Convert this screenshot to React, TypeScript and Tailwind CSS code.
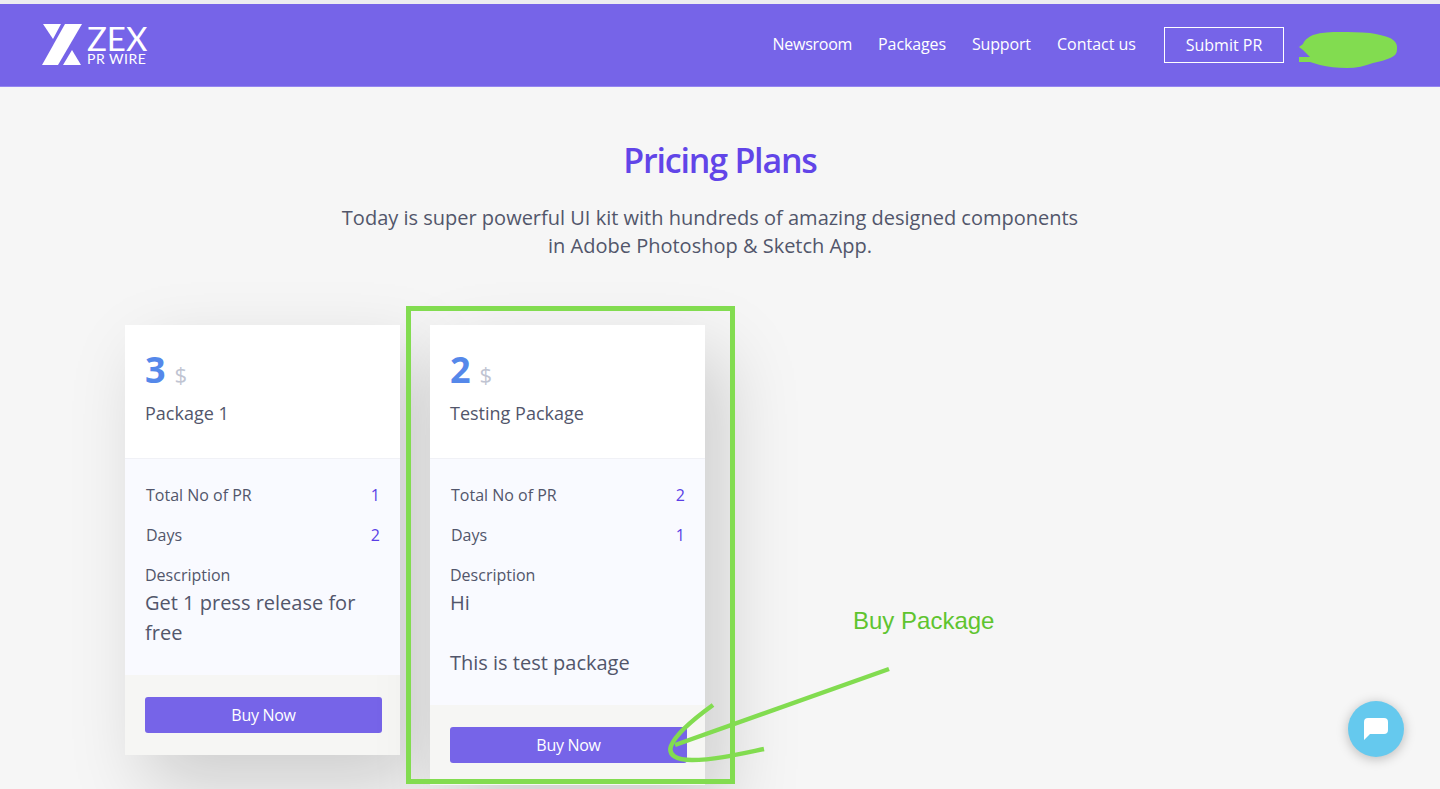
import React from 'react';

const NAV_LINKS = [
  { label: 'Newsroom', cls: 'tracking-[-0.25px]' },
  { label: 'Packages', cls: 'tracking-[-0.12px]' },
  { label: 'Support', cls: 'tracking-[-0.15px]' },
  { label: 'Contact us', cls: '' },
];

interface PlanProps {
  price: string;
  name: string;
  total: string;
  days: string;
  children: React.ReactNode;
}

function PlanCard({ price, name, total, days, children }: PlanProps) {
  return (
    <div className="w-[275px] bg-[#f6f6f4] shadow-[20px_30px_70px_rgba(0,0,0,0.17)]">
      {/* Plan title */}
      <div className="relative z-10 h-[134px] bg-white px-5 pt-[22px] border-b border-[#f0f1f6]">
        <div className="flex items-baseline h-[46px]">
          <span className="text-[36px] leading-[46px] font-bold text-[#5588ea]">{price}</span>
          <span className="ml-[9px] text-[22px] text-[#c0c4d2]">$</span>
        </div>
        <div className="mt-[6px] text-[18px] leading-[28px] text-[#52566b]">{name}</div>
      </div>

      {/* Plan details */}
      <div className="relative z-10 bg-[#f9faff] px-5 pt-[16px] pb-[27px] text-[#52566b]">
        <div className="flex justify-between pl-px h-[40px] items-center text-[16px] font-medium">
          <span>Total No of PR</span>
          <span className="text-[#5b3fe6] font-normal">{total}</span>
        </div>
        <div className="flex justify-between pl-px h-[40px] items-center text-[16px] font-medium">
          <span>Days</span>
          <span className="text-[#5b3fe6] font-normal">{days}</span>
        </div>
        <div className="mt-[8px] text-[16px] leading-[24px] font-medium">Description</div>
        <div className="pt-px text-[20px] leading-[30px]">{children}</div>
      </div>

      <div className="px-5 pt-[22px] pb-[22px]">
        <button className="w-[237px] h-[36px] rounded-[3px] bg-[#7664e8] text-white text-[16px] tracking-[-0.3px]">Buy Now</button>
      </div>
    </div>
  );
}

export default function App() {
  return (
    <div className="relative h-[789px] overflow-hidden bg-[#f6f6f6] font-['Open_Sans',sans-serif]">
      <div className="h-[4px] bg-[#ececf0]" />

      {/* Header */}
      <header className="flex items-center justify-between h-[83px] bg-[#7664e8] pl-[42px] pr-[42px] border-b border-[#9486f0]">
        <div className="flex items-center">
          <svg width="40" height="42" viewBox="42 24 40 42" fill="#fff">
            <path d="M43 24h18l-8 15z" />
            <path d="M65 24h17L58 65H42z" />
            <path d="M72 50l9 15H63z" />
          </svg>
          <div className="ml-[5px] w-[60px] text-white font-['Lato',sans-serif]">
            <div className="text-[33px] leading-[26px]">ZEX</div>
            <div className="text-[14px] leading-[15px] whitespace-nowrap tracking-[0.5px]">PR WIRE</div>
          </div>
        </div>

        <nav className="flex items-center text-white text-[16px] -translate-y-px">
          {NAV_LINKS.map((link) => (
            <a key={link.label} className={`mr-[26px] ${link.cls}`}>{link.label}</a>
          ))}
          <a className="ml-[2px] w-[120px] h-[36px] translate-y-px flex items-center justify-center border border-white">Submit PR</a>
          <div className="w-[114px]" />
        </nav>
      </header>

      {/* Title */}
      <section className="text-center pt-[50px]">
        <h1 className="text-[34px] leading-[46px] font-semibold tracking-[-1.2px] text-[#6145e8]">Pricing Plans</h1>
        <p className="mt-[21px] pr-[20px] text-[20px] leading-[28px] text-[#52566b]">
          Today is super powerful UI kit with hundreds of amazing designed components
          <br />
          in Adobe Photoshop &amp; Sketch App.
        </p>
      </section>

      {/* Plans */}
      <section className="flex items-start gap-[30px] pl-[125px] pt-[65px]">
        <PlanCard price="3" name="Package 1" total="1" days="2">
          Get 1 press release for free
        </PlanCard>
        <PlanCard price="2" name="Testing Package" total="2" days="1">
          Hi
          <br />
          <br />
          This is test package
        </PlanCard>
      </section>

      {/* Green annotations drawn over the screenshot */}
      <svg className="absolute z-20 inset-0 pointer-events-none" width="1440" height="789" fill="none" stroke="#82dc50">
        <path d="M408.500 308.500H732.500V781.500H408.500Z" strokeWidth="5" />
        <path d="M889 669L675 745" strokeWidth="4.500" />
        <path d="M713 705C695 718 676 733 671 746C668 755 676 760 692 760C715 760 740 754 764 749" strokeWidth="4.500" />
        <path
          d="M1299 47L1303 44C1305 39 1309 37 1313 35C1322 32 1331 32 1340 32C1350 32 1360 32 1370 33C1378 34 1385 36 1390 38C1394 40 1397 43 1397 47C1397 50 1397 53 1395 55C1390 59 1382 61 1373 63C1365 66 1356 68 1347 68C1337 68 1328 67 1320 65L1310 62H1299V57H1310L1303 50Z"
          fill="#82dc50"
          stroke="none"
        />
      </svg>

      <div className="absolute left-[853px] top-[606px] text-[24px] leading-[30px] text-[#5fc42f] font-['Liberation_Sans',sans-serif]">Buy Package</div>

      {/* Chat launcher */}
      <button className="absolute left-[1348px] top-[701px] w-[56px] h-[56px] rounded-full bg-[#65c9ee] flex items-center justify-center shadow-[0_2px_12px_rgba(0,0,0,0.25)]">
        <svg width="24" height="22" viewBox="0 0 24 22" fill="#fff">
          <path d="M4 0h16a4 4 0 0 1 4 4v8a4 4 0 0 1-4 4H6l-6 6V4a4 4 0 0 1 4-4z" />
        </svg>
      </button>
    </div>
  );
}
